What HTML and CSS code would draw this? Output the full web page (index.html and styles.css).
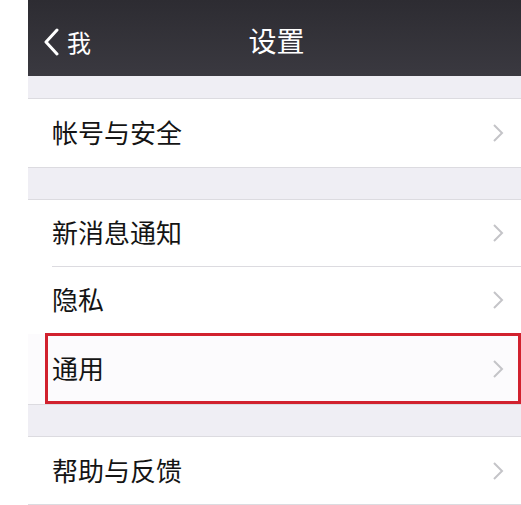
FILE: index.html
```html
<!DOCTYPE html>
<html lang="zh">
<head>
<meta charset="utf-8">
<link rel="stylesheet" href="styles.css">
</head>
<body>
<div class="page">
  <header class="nav">
    <div class="back">
      <svg class="back-icon" width="17" height="28" viewBox="0 0 17 28"><polyline points="14,2 3,14 14,26" fill="none" stroke="#fff" stroke-width="3" stroke-linecap="round" stroke-linejoin="round"/></svg>
      <span class="back-text">我</span>
    </div>
    <div class="title">设置</div>
  </header>

  <div class="gap gap-first"></div>
  <section class="group">
    <div class="row row-first"><span class="label">帐号与安全</span><svg class="chev" width="12" height="20" viewBox="0 0 12 20"><polyline points="2,2 10,10 2,18" fill="none" stroke="#c4c4c8" stroke-width="2"/></svg></div>
  </section>

  <div class="gap"></div>
  <section class="group">
    <div class="row sep"><span class="label">新消息通知</span><svg class="chev" width="12" height="20" viewBox="0 0 12 20"><polyline points="2,2 10,10 2,18" fill="none" stroke="#c4c4c8" stroke-width="2"/></svg></div>
    <div class="row sep"><span class="label">隐私</span><svg class="chev" width="12" height="20" viewBox="0 0 12 20"><polyline points="2,2 10,10 2,18" fill="none" stroke="#c4c4c8" stroke-width="2"/></svg></div>
    <div class="row highlight"><span class="label">通用</span><svg class="chev" width="12" height="20" viewBox="0 0 12 20"><polyline points="2,2 10,10 2,18" fill="none" stroke="#c4c4c8" stroke-width="2"/></svg></div>
  </section>

  <div class="gap"></div>
  <section class="group">
    <div class="row"><span class="label">帮助与反馈</span><svg class="chev" width="12" height="20" viewBox="0 0 12 20"><polyline points="2,2 10,10 2,18" fill="none" stroke="#c4c4c8" stroke-width="2"/></svg></div>
  </section>
</div>
</body>
</html>
```

FILE: styles.css
```css
html, body {
  margin: 0;
  padding: 0;
  background: #ffffff;
  height: 505px;
  overflow: hidden;
}
body {
  font-family: "Noto Sans CJK SC", "Noto Sans", sans-serif;
}
.page {
  margin-left: 28px;
  background: #efeef4;
  height: 505px;
}
.nav {
  height: 76px;
  background: linear-gradient(#2d2c32, #3a3940);
  position: relative;
  display: flex;
  align-items: center;
  justify-content: center;
}
.back {
  position: absolute;
  left: 15px;
  top: 28px;
  display: flex;
  align-items: center;
  gap: 7px;
}
.back-icon {
  display: block;
}
.back-text {
  color: #ffffff;
  font-size: 24px;
  line-height: 28px;
}
.title {
  color: #ffffff;
  font-size: 28px;
  line-height: 34px;
  margin-left: 4px;
  margin-top: 4px;
}
.gap {
  height: 22px;
}
.group + .gap {
  height: 31px;
}
.group {
  background: #ffffff;
  border-top: 1px solid #dcdbe0;
  border-bottom: 1px solid #dcdbe0;
}
.row {
  height: 67px;
  display: flex;
  align-items: center;
  justify-content: space-between;
  padding: 0 17px 0 24px;
  position: relative;
  background: #ffffff;
}
.row-first {
  height: 68px;
}
.row.sep {
  height: 66px;
  padding-bottom: 1px;
}
.row.sep::after {
  content: "";
  position: absolute;
  left: 24px;
  right: 0;
  bottom: 0;
  height: 1px;
  background: #dcdbe0;
}
.label {
  font-size: 26px;
  font-weight: 400;
  color: #141414;
  line-height: 34px;
  margin-top: -2px;
}
.chev {
  display: block;
}
.highlight {
  background: #fcfbfd;
  height: 70px;
}
.highlight::before {
  content: "";
  position: absolute;
  left: 17px;
  right: 0;
  top: -1px;
  bottom: 0;
  border: 3px solid #d1212e;
  pointer-events: none;
}
```
